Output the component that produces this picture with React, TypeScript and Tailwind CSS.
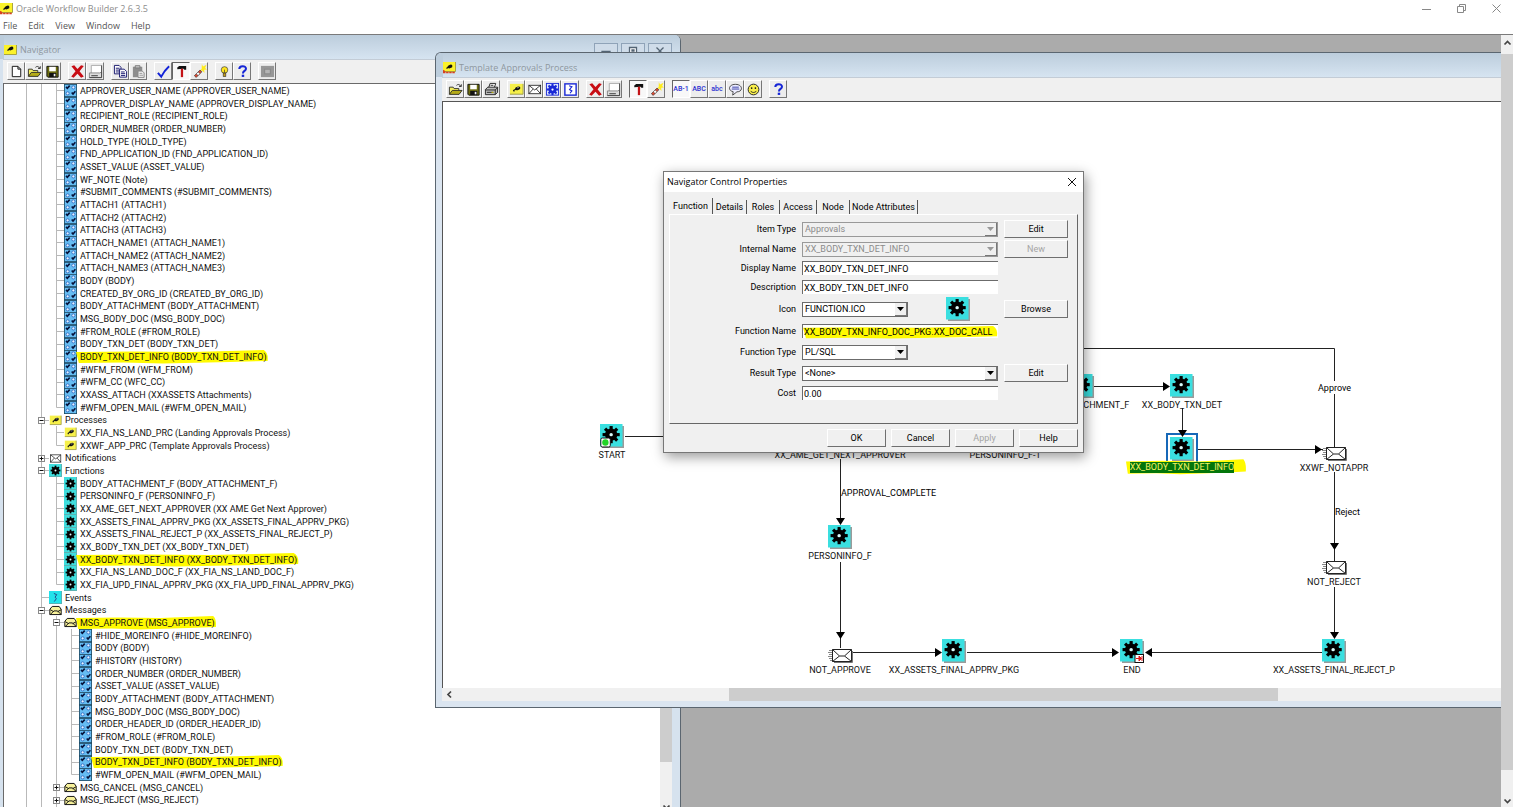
import { ReactNode } from "react";
import clsx from "clsx";

const UI = "font-['Roboto','Liberation_Sans',sans-serif]";
const CAPTION = "font-['Open_Sans','Noto_Sans',sans-serif]";

/* ---------- Icons ---------- */

const GEAR_TEETH = [0, 45, 90, 135, 180, 225, 270, 315];

function Gear({ color = "#000", hole = "#d8fbfb" }: { color?: string; hole?: string }) {
  return (
    <g>
      <circle cx="8" cy="8" r="4.3" fill={color} />
      {GEAR_TEETH.map((a) => (
        <rect key={a} x="6.9" y="2" width="2.2" height="4" fill={color} transform={`rotate(${a} 8 8)`} />
      ))}
      <circle cx="8" cy="8" r="1.2" fill={hole} />
    </g>
  );
}

function Blob() {
  return (
    <g>
      <ellipse cx="9.3" cy="6.8" rx="2.9" ry="1.9" transform="rotate(-18 9.3 6.8)" fill="#111" />
      <path d="M7.5 7.500L4.500 9.300M5.300 8.300v1.800" stroke="#111" strokeWidth="1.3" />
      <path d="M8.500 6.300l2-.6" stroke="#bbb" strokeWidth=".8" />
    </g>
  );
}

const glyphs: Record<string, ReactNode> = {
  new: <path d="M3.5 2.5h6l3 3v8h-9zM9.5 2.5v3h3" fill="#fff" stroke="#111" />,
  open: (
    <g stroke="#222" strokeWidth=".9">
      <path d="M1.5 13V5.5h4l1 1.5h5v2" fill="#f4ee5c" />
      <path d="M1.5 13.2L4.5 9H15l-3.2 4.2z" fill="#b5ab17" />
      <path d="M9 3.6c1.5-1.5 3.5-1.2 4.5.8M14.2 2.4v2.4h-2.4" fill="none" />
    </g>
  ),
  save: (
    <g>
      <path d="M2 2.5h12v11.5H3l-1-1z" fill="#6d6d10" stroke="#111" />
      <rect x="4.5" y="3" width="7" height="4.8" fill="#fff" />
      <rect x="4.5" y="9.5" width="7.5" height="4.5" fill="#111" />
      <rect x="9.3" y="10.5" width="1.8" height="2.6" fill="#eee" />
    </g>
  ),
  print: (
    <g stroke="#222">
      <path d="M5 6l1.5-4.5h6L11 6" fill="#fff" />
      <path d="M1.5 8l2.5-2.5h10.5V11l-2.5 2.5H1.5z" fill="#bdbdbd" />
      <path d="M1.5 8.5H12l2.5-2.5M12 8.5v5M3 11h7M7 3.5h3" fill="none" />
      <path d="M8 11h2" stroke="#d6c900" />
    </g>
  ),
  remove: (
    <path d="M1.5 2.3l3-1L8 5.2l3.8-4 2.9 1L10.200 7.800l4.500 5.400-2.900 1.400L8 10.500l-4.200 4.100L1.300 13.200 5.900 7.800z" fill="#c80d14" />
  ),
  props: (
    <g>
      <path d="M3.5 1.5h11v9h-11z" fill="#fff" stroke="#aaa" />
      <path d="M1.5 9.5h11l2-1v6h-13z" fill="#ddd" stroke="#888" />
      <path d="M3.5 12.5h7" stroke="#333" />
      <path d="M14.500 1.500v13h-13" fill="none" stroke="#444" />
    </g>
  ),
  copy: (
    <g fill="#fff" stroke="#15156d">
      <path d="M1.5 1.5h5l2 2v7h-7z" />
      <path d="M3 4.5h4M3 6.5h4M3 8.5h4" />
      <path d="M7 5.5h5l2.5 2.5v6H7z" />
      <path d="M8.5 8.5h4M8.5 10.3h4.5M8.5 12.2h4.5" />
    </g>
  ),
  paste: (
    <g>
      <path d="M2 3h10v11H2z" fill="#8d8d8d" />
      <path d="M4.5 1.8h5v2.4h-5z" fill="#c9c9c9" stroke="#777" />
      <path d="M7.5 7.5h4.5l2 2v4.8H7.5z" fill="#eee" stroke="#888" />
      <path d="M9 10h3M9 12h4" stroke="#999" />
    </g>
  ),
  check: <path d="M2 9.5L5.6 13.5C8 8.8 10.3 5.6 14 2.3" fill="none" stroke="#1222d8" strokeWidth="2.1" />,
  pin: (
    <g>
      <path d="M3.5 5.5V3.6l2-1.4h7.5V6h-2l-.8-1z" fill="#111" />
      <rect x="7.3" y="5" width="2.4" height="9" fill="#c41317" />
    </g>
  ),
  wand: (
    <g>
      <path d="M10.5 0l1.200 2.600L15.500.800l-1.500 3.400 2 1.600-3 .4.300 3.300-2.200-2.300-3-.4 2.200-1.600z" fill="#ffec1c" />
      <path d="M2.500 12.500l6-6 2 1.800-6 6z" fill="#df4a31" stroke="#333" strokeWidth=".7" />
      <path d="M4.500 10.500l2-2 2 1.800-2 2z" fill="#fff" stroke="#333" strokeWidth=".5" />
    </g>
  ),
  bulb: (
    <g stroke="#333" strokeWidth=".7">
      <circle cx="8" cy="6.3" r="3.5" fill="#ffe51f" />
      <rect x="6.6" y="9.7" width="2.8" height="3.6" fill="#c99c12" />
      <path d="M8 6v3.5" />
    </g>
  ),
  help: (
    <g>
      <path d="M4.6 5.4C4.6 1.4 11.7 1.3 11.7 5c0 2.4-3.2 2.4-3.2 5" fill="none" stroke="#1626d6" strokeWidth="2.2" />
      <rect x="7.2" y="11.4" width="2.6" height="2.4" fill="#1626d6" />
    </g>
  ),
  blank: (
    <g>
      <rect x="1" y="2" width="14" height="12" fill="#969696" />
      <rect x="5" y="5.5" width="6" height="5" fill="#b4b4b4" stroke="#858585" />
    </g>
  ),
  process: (
    <g>
      <rect x="1" y="2" width="14" height="11" fill="#f6f04a" />
      <path d="M15 2v11H1" fill="none" stroke="#9c9a48" />
      <Blob />
    </g>
  ),
  envelope: (
    <g stroke="#222" strokeWidth=".9">
      <rect x="2" y="3.5" width="12.5" height="9" fill="#fff" />
      <path d="M2 3.5l6.2 5 6.3-5M2 12.5l4.5-5M14.5 12.5L10 7.5" fill="none" />
    </g>
  ),
  message: (
    <g stroke="#111" strokeWidth="1.2">
      <path d="M1 13V6.5L4 3h8.5L15 6.5V13z" fill="#f7f19a" />
      <path d="M1.5 13l4.5-4.5h4.5L15 13M1.5 7L6 9.5M15 7l-4.5 2.5" fill="none" />
    </g>
  ),
  gearBlue: (
    <g>
      <rect x="1.5" y="1.5" width="13" height="12.5" fill="#dfe8ff" stroke="#1a29d6" />
      <Gear color="#1a29d6" hole="#fff" />
    </g>
  ),
  eventBlue: (
    <g fill="none" stroke="#1a29d6">
      <rect x="2" y="2" width="12" height="12" fill="#fff" strokeWidth="1.5" />
      <path d="M6.500 4l3 1L7 8l2.500 1.500L7.500 12" strokeWidth="1.200" />
    </g>
  ),
  note: (
    <g>
      <path d="M8 2.5c8 0 8.3 8 1.5 8L5 14l.5-3.700C-.5 9 .5 2.500 8 2.500z" fill="#eef" stroke="#333" strokeWidth=".9" />
      <path d="M4.5 5.5h7M4 7.5h8" stroke="#222b9c" strokeWidth=".9" />
    </g>
  ),
  smile: (
    <g>
      <circle cx="8" cy="8" r="5.7" fill="#f8ee4a" stroke="#222" />
      <circle cx="6" cy="6.5" r=".9" fill="#111" />
      <circle cx="10" cy="6.5" r=".9" fill="#111" />
      <path d="M5 9.5c1 2.200 5 2.200 6 0" fill="none" stroke="#222" />
    </g>
  ),
  attribute: (
    <g>
      <rect width="16" height="16" fill="#66bdf3" />
      <path d="M2.500 3.500l1.600 1.800L7 2M9.500 10.500l1.600 1.800 2.900-3.300" fill="none" stroke="#06123a" strokeWidth="2" />
      <circle cx="11.500" cy="4.200" r="1.900" fill="#e2f4ff" stroke="#1d55b8" strokeWidth=".9" />
      <circle cx="4.500" cy="11.500" r="1.900" fill="#e2f4ff" stroke="#1d55b8" strokeWidth=".9" />
      <rect x=".5" y=".5" width="15" height="15" fill="none" stroke="#1f4a63" />
    </g>
  ),
  fn: (
    <g>
      <rect width="16" height="16" fill="#3fdede" />
      <path d="M15.500 0v15.500H0" fill="none" stroke="#69a3a3" />
      <Gear />
    </g>
  ),
  event: (
    <g>
      <rect width="16" height="16" fill="#22e2ea" />
      <path d="M15.500 0v15.500H0" fill="none" stroke="#69a3a3" />
      <path d="M6 3l3.500 1.500L7.500 7.500 9 9.500 6.500 13" fill="none" stroke="#222a77" />
    </g>
  ),
};

function Glyph({ name, className }: { name: string; className?: string }) {
  return (
    <svg viewBox="0 0 16 16" className={clsx("shrink-0", className)} aria-hidden="true">
      {glyphs[name]}
    </svg>
  );
}

function AppIcon({ builder = false }: { builder?: boolean }) {
  return (
    <svg viewBox="0 0 13 12" className="h-3 w-[13px] shrink-0" aria-hidden="true">
      <rect y={builder ? 0 : 1} width="12" height="9" fill="#fbf22b" />
      <path d={builder ? "M12.500 0v9.500H0" : "M12.500 1v9.500H0"} fill="none" stroke="#a9a540" />
      <ellipse cx="7" cy="4.500" rx="2.500" ry="1.700" fill="#111" transform="rotate(-20 7 4.500)" />
      <path d="M5.500 5L3.500 6.500" stroke="#111" strokeWidth="1.300" />
      {builder && <path d="M0 10.500h12M0 8.500l2 1.500" stroke="#d6421f" strokeWidth="1.600" strokeDasharray="2.500 .6" />}
    </svg>
  );
}

/* ---------- Toolbars ---------- */

type Tool = { icon?: string; text?: string; label: string; pressed?: boolean };

const navigatorTools: Tool[][] = [
  [{ icon: "new", label: "New" }, { icon: "open", label: "Open" }, { icon: "save", label: "Save" }],
  [{ icon: "remove", label: "Delete" }, { icon: "props", label: "Properties" }],
  [{ icon: "copy", label: "Copy" }, { icon: "paste", label: "Paste" }],
  [{ icon: "check", label: "Verify" }, { icon: "pin", label: "Developer mode", pressed: true }, { icon: "wand", label: "Quick start" }],
  [{ icon: "bulb", label: "Find" }, { icon: "help", label: "Help" }],
  [{ icon: "blank", label: "Stop" }],
];

const processTools: Tool[][] = [
  [{ icon: "open", label: "Open" }, { icon: "save", label: "Save" }, { icon: "print", label: "Print" }],
  [
    { icon: "process", label: "New process" },
    { icon: "envelope", label: "New notification" },
    { icon: "gearBlue", label: "New function" },
    { icon: "eventBlue", label: "New event" },
  ],
  [{ icon: "remove", label: "Delete" }, { icon: "props", label: "Properties" }],
  [{ icon: "pin", label: "Developer mode", pressed: true }, { icon: "wand", label: "Quick start" }],
  [
    { text: "AB-1", label: "Instance labels", pressed: true },
    { text: "ABC", label: "Internal names" },
    { text: "abc", label: "Display names" },
    { icon: "note", label: "Comments" },
    { icon: "smile", label: "Performers" },
  ],
  [{ icon: "help", label: "Help" }],
];

function Toolbar({ groups }: { groups: Tool[][] }) {
  return (
    <div className="flex h-6 shrink-0 items-start gap-[7px] border-t border-[#c3ccd6] bg-[#f0f0f0] pt-[2px] pl-1">
      {groups.map((group, i) => (
        <div key={i} className="flex">
          {group.map((tool) => (
            <button
              key={tool.label}
              type="button"
              aria-label={tool.label}
              className={clsx(
                "flex h-[18px] w-[18px] items-center justify-center border",
                tool.pressed
                  ? "border-t-[#666] border-r-white border-b-white border-l-[#666] bg-[#f8f8f8]"
                  : "border-t-white border-r-[#777] border-b-[#777] border-l-white bg-[#ededed]",
              )}
            >
              {tool.icon ? (
                <Glyph name={tool.icon} className="h-[15px] w-[15px]" />
              ) : (
                <span className="text-[7px] leading-none font-medium text-[#2a2fd0]">{tool.text}</span>
              )}
            </button>
          ))}
        </div>
      ))}
    </div>
  );
}

/* ---------- Navigator tree ---------- */

type TreeRow = { guides: string; icon: string; text: string; marked?: boolean };

// guides: one character per column, "|" line, "t" tee, "l" last child, "+" / "-" expander
const attributes = (guides: string, names: string[], marked: string): TreeRow[] =>
  names.map((text, i) => ({
    guides: guides + (i === names.length - 1 ? "l" : "t"),
    icon: "attribute",
    text,
    marked: text === marked,
  }));

const MARKED_ATTRIBUTE = "BODY_TXN_DET_INFO (BODY_TXN_DET_INFO)";

const functionNames = [
  "BODY_ATTACHMENT_F (BODY_ATTACHMENT_F)",
  "PERSONINFO_F (PERSONINFO_F)",
  "XX_AME_GET_NEXT_APPROVER (XX AME Get Next Approver)",
  "XX_ASSETS_FINAL_APPRV_PKG (XX_ASSETS_FINAL_APPRV_PKG)",
  "XX_ASSETS_FINAL_REJECT_P (XX_ASSETS_FINAL_REJECT_P)",
  "XX_BODY_TXN_DET (XX_BODY_TXN_DET)",
  "XX_BODY_TXN_DET_INFO (XX_BODY_TXN_DET_INFO)",
  "XX_FIA_NS_LAND_DOC_F (XX_FIA_NS_LAND_DOC_F)",
  "XX_FIA_UPD_FINAL_APPRV_PKG (XX_FIA_UPD_FINAL_APPRV_PKG)",
];

const tree: TreeRow[] = [
  ...attributes(
    "||",
    [
      "APPROVER_USER_NAME (APPROVER_USER_NAME)",
      "APPROVER_DISPLAY_NAME (APPROVER_DISPLAY_NAME)",
      "RECIPIENT_ROLE (RECIPIENT_ROLE)",
      "ORDER_NUMBER (ORDER_NUMBER)",
      "HOLD_TYPE (HOLD_TYPE)",
      "FND_APPLICATION_ID (FND_APPLICATION_ID)",
      "ASSET_VALUE (ASSET_VALUE)",
      "WF_NOTE (Note)",
      "#SUBMIT_COMMENTS (#SUBMIT_COMMENTS)",
      "ATTACH1 (ATTACH1)",
      "ATTACH2 (ATTACH2)",
      "ATTACH3 (ATTACH3)",
      "ATTACH_NAME1 (ATTACH_NAME1)",
      "ATTACH_NAME2 (ATTACH_NAME2)",
      "ATTACH_NAME3 (ATTACH_NAME3)",
      "BODY (BODY)",
      "CREATED_BY_ORG_ID (CREATED_BY_ORG_ID)",
      "BODY_ATTACHMENT (BODY_ATTACHMENT)",
      "MSG_BODY_DOC (MSG_BODY_DOC)",
      "#FROM_ROLE (#FROM_ROLE)",
      "BODY_TXN_DET (BODY_TXN_DET)",
      MARKED_ATTRIBUTE,
      "#WFM_FROM (WFM_FROM)",
      "#WFM_CC (WFC_CC)",
      "XXASS_ATTACH (XXASSETS Attachments)",
      "#WFM_OPEN_MAIL (#WFM_OPEN_MAIL)",
    ],
    MARKED_ATTRIBUTE,
  ),
  { guides: "|-", icon: "process", text: "Processes" },
  { guides: "||t", icon: "process", text: "XX_FIA_NS_LAND_PRC (Landing Approvals Process)" },
  { guides: "||l", icon: "process", text: "XXWF_APP_PRC (Template Approvals Process)" },
  { guides: "|+", icon: "envelope", text: "Notifications" },
  { guides: "|-", icon: "fn", text: "Functions" },
  ...functionNames.map((text, i) => ({
    guides: i === functionNames.length - 1 ? "||l" : "||t",
    icon: "fn",
    text,
    marked: i === 6,
  })),
  { guides: "|t", icon: "event", text: "Events" },
  { guides: "|-", icon: "message", text: "Messages" },
  { guides: "||-", icon: "message", text: "MSG_APPROVE (MSG_APPROVE)", marked: true },
  ...attributes(
    "|||",
    [
      "#HIDE_MOREINFO (#HIDE_MOREINFO)",
      "BODY (BODY)",
      "#HISTORY (HISTORY)",
      "ORDER_NUMBER (ORDER_NUMBER)",
      "ASSET_VALUE (ASSET_VALUE)",
      "BODY_ATTACHMENT (BODY_ATTACHMENT)",
      "MSG_BODY_DOC (MSG_BODY_DOC)",
      "ORDER_HEADER_ID (ORDER_HEADER_ID)",
      "#FROM_ROLE (#FROM_ROLE)",
      "BODY_TXN_DET (BODY_TXN_DET)",
      MARKED_ATTRIBUTE,
      "#WFM_OPEN_MAIL (#WFM_OPEN_MAIL)",
    ],
    MARKED_ATTRIBUTE,
  ),
  { guides: "||+", icon: "message", text: "MSG_CANCEL (MSG_CANCEL)" },
  { guides: "||+", icon: "message", text: "MSG_REJECT (MSG_REJECT)" },
];

function Guide({ kind }: { kind: string }) {
  const box = kind === "+" || kind === "-";
  return (
    <svg viewBox="0 0 15 13" className="h-[13px] w-[15px] shrink-0" aria-hidden="true">
      <path d={kind === "l" ? "M7.500 0v6.500" : "M7.500 0v13"} stroke="#b9b9b9" />
      {kind !== "|" && <path d="M7.500 6.500h7.500" stroke="#b9b9b9" />}
      {box && <rect x="4.500" y="3.500" width="6" height="6" fill="#fff" stroke="#8a8a8a" />}
      {box && <path d={kind === "+" ? "M5.500 6.500h4M7.500 4.500v4" : "M5.500 6.500h4"} stroke="#111" />}
    </svg>
  );
}

// Felt-tip marker stroke behind a label
function Marker({ className }: { className: string }) {
  return (
    <svg
      viewBox="0 0 200 16"
      preserveAspectRatio="none"
      className={clsx("pointer-events-none absolute", className)}
      aria-hidden="true"
    >
      <path d="M0 3L60 2.500 120 3 195 1Q200 4 199 12L160 13 90 14.500 50 13.500 3 14z" fill="#fffa00" />
    </svg>
  );
}

function Tree() {
  return (
    <ul className="min-w-0 flex-1 overflow-hidden bg-white pl-[15px]">
      {tree.map((row, i) => (
        <li key={i} className="flex h-[13px] items-center [&:nth-child(3n)]:h-3">
          {row.guides.split("").map((kind, j) => (
            <Guide key={j} kind={kind} />
          ))}
          <Glyph name={row.icon} className="h-[13px] w-[13px]" />
          <span className="relative ml-[3px] text-[9px] leading-3 whitespace-nowrap text-[#111]">
            {row.marked && <Marker className="-top-[2px] -left-1 h-4 w-[calc(100%+6px)]" />}
            <span className="relative">{row.text}</span>
          </span>
        </li>
      ))}
    </ul>
  );
}

/* ---------- Windows ---------- */

function Caption({ title }: { title: string }) {
  return (
    <div className="flex h-6 shrink-0 items-center gap-[3px] bg-linear-to-b from-[#bccddc] to-[#d6e4f1] pt-[6px]">
      <AppIcon builder={title !== "Navigator"} />
      <h2 className={clsx(CAPTION, "text-[9px] leading-3 text-[#8f989f]")}>{title}</h2>
    </div>
  );
}

function Chevron({ dir }: { dir: "up" | "down" | "left" }) {
  const d = { up: "M1.500 5.500L4.500 2.500 7.500 5.500", down: "M1.500 2.500L4.500 5.500 7.500 2.500", left: "M6 1.500L3 4.500 6 7.500" }[dir];
  return (
    <svg viewBox="0 0 9 9" className="h-[9px] w-[9px]" aria-hidden="true">
      <path d={d} fill="none" stroke="#444" strokeWidth="1.700" />
    </svg>
  );
}

function WindowButtons() {
  const shapes = ["M8 8.500h8v3H8z", "M8.500 4.500h7v7h-7zM11 7h2v1h-2z", "M8.500 4.500l7 7M15.500 4.500l-7 7"];
  return (
    <div className="absolute top-2 right-2 flex gap-[3px]">
      {["Minimize", "Maximize", "Close"].map((label, i) => (
        <button key={label} type="button" aria-label={label} className="h-4 w-6 border border-[#8fa3b8] bg-[#cfdce9]">
          <svg viewBox="0 0 24 16" className="-mt-px -ml-px h-4 w-6" aria-hidden="true">
            <path d={shapes[i]} fill="#fff" stroke="#536474" strokeWidth="1.300" />
          </svg>
        </button>
      ))}
    </div>
  );
}

function NavigatorWindow() {
  return (
    <section className="absolute top-0 bottom-0 left-0 flex w-[681px] flex-col overflow-hidden rounded-tr-md border-r border-[#5b6670] bg-[#d6e2ee] pr-2 pl-[3px]">
      <div className="-mr-2 -ml-[3px] bg-[#bccddc] pl-1">
        <Caption title="Navigator" />
      </div>
      <WindowButtons />
      <Toolbar groups={navigatorTools} />
      <div className="flex min-h-0 flex-1 border-t border-l border-[#6a6a6a]">
        <Tree />
        <div className="flex w-3 flex-col items-center bg-[#f0f0f0]">
          <div className="h-[678px] w-full bg-[#cdcdcd]" />
          <div className="mt-auto h-1 overflow-hidden">
            <Chevron dir="down" />
          </div>
        </div>
      </div>
    </section>
  );
}

/* ---------- Process diagram ---------- */

type DiagramNode = {
  x: number;
  y: number;
  label: string;
  kind: "fn" | "mail";
  badge?: "start" | "end";
  selected?: boolean;
};

// x / y is the middle of the icon on the canvas
const nodes: DiagramNode[] = [
  { x: 169, y: 334, label: "START", kind: "fn", badge: "start" },
  { x: 397, y: 334, label: "XX_AME_GET_NEXT_APPROVER", kind: "fn" },
  { x: 562, y: 334, label: "PERSONINFO_F-1", kind: "fn" },
  { x: 639, y: 284, label: "BODY_ATTACHMENT_F", kind: "fn" },
  { x: 739, y: 284, label: "XX_BODY_TXN_DET", kind: "fn" },
  { x: 739, y: 347, label: "XX_BODY_TXN_DET_INFO", kind: "fn", selected: true },
  { x: 891, y: 347, label: "XXWF_NOTAPPR", kind: "mail" },
  { x: 891, y: 461, label: "NOT_REJECT", kind: "mail" },
  { x: 397, y: 435, label: "PERSONINFO_F", kind: "fn" },
  { x: 397, y: 549, label: "NOT_APPROVE", kind: "mail" },
  { x: 511, y: 549, label: "XX_ASSETS_FINAL_APPRV_PKG", kind: "fn" },
  { x: 689, y: 549, label: "END", kind: "fn", badge: "end" },
  { x: 891, y: 549, label: "XX_ASSETS_FINAL_REJECT_P", kind: "fn" },
];

const wires = [
  "M182 334.500H300",
  "M397.500 357V418",
  "M397.500 460V546",
  "M409 550.500H494",
  "M524 550.500H672",
  "M879 550.500H706",
  "M560 246.500H891.500V279",
  "M891.500 292V346",
  "M891.500 370V460",
  "M891.500 485V532",
  "M651 284.500H722",
  "M739.500 306V328",
  "M753 347.500H880",
];

const arrows = [
  "M393 416h9l-4.500 7z",
  "M393 530h9l-4.500 7z",
  "M492 546v9l7-4.500z",
  "M669 546v9l7-4.500z",
  "M709 546v9l-7-4.500z",
  "M720 280v9l7-4.500z",
  "M735 328h9l-4.500 7z",
  "M872 343v9l7-4.500z",
  "M887 441h9l-4.500 7z",
  "M887 530h9l-4.500 7z",
];

function FunctionTile({ badge }: { badge?: "start" | "end" }) {
  return (
    <svg viewBox="0 0 24 24" className="h-6 w-6" aria-hidden="true">
      <path d="M2 2h22v22H2z" fill="#9b9b9b" />
      <rect width="22.500" height="22.500" fill="#3adfe0" />
      <g transform="translate(-.3 -.8) scale(1.430)">
        <Gear />
      </g>
      {badge === "start" && (
        <g>
          <rect x=".8" y="14" width="9.500" height="9" rx="1.500" fill="#fff" stroke="#111" />
          <circle cx="5.400" cy="18.500" r="3.200" fill="#22d426" />
        </g>
      )}
      {badge === "end" && (
        <g>
          <rect x="15" y="15.500" width="8.500" height="8" fill="#fff" stroke="#111" />
          <path d="M16 19.500h4M19 17l2.500 2.500L19 22zM22 17v5" fill="#e01b1b" stroke="#e01b1b" />
        </g>
      )}
    </svg>
  );
}

function MailTile() {
  return (
    <svg viewBox="0 0 25 24" className="h-6 w-[25px]" aria-hidden="true">
      <path d="M4.500 10.500h19v12h-19z" fill="#fff" stroke="#222" />
      <path d="M24.500 12v11.500H6" fill="none" stroke="#777" />
      <path d="M4.500 10.500l7 6.500h5l7-6.500M4.500 22.500l7-5.500M23.500 22.500l-7-5.500" fill="none" stroke="#222" />
      <path d="M1 11.500h3M0 13.500h4M1 15.500h3M0 17.500h4M1 19.500h3M2 21.500h2" stroke="#888" />
    </svg>
  );
}

function ProcessNode({ node }: { node: DiagramNode }) {
  return (
    <div
      className="absolute flex w-40 -translate-x-1/2 flex-col items-center"
      style={{ left: node.x, top: node.y - 12 }}
    >
      {node.kind === "fn" ? (
        <div className={clsx(node.selected && "outline-2 outline-offset-2 outline-[#1668b8]")}>
          <FunctionTile badge={node.badge} />
        </div>
      ) : (
        <MailTile />
      )}
      <span className="relative mt-px text-[9px] leading-3 whitespace-nowrap text-[#111]">
        {node.selected && <Marker className="-top-1 -left-1 h-[18px] w-[calc(100%+16px)]" />}
        <span className={clsx("relative block", node.selected && "h-[11px] bg-[#04760a] leading-[11px] text-[#f4f266]")}>
          {node.label}
        </span>
      </span>
    </div>
  );
}

function Diagram() {
  return (
    <div className="relative min-h-0 flex-1 overflow-hidden border-t border-l border-[#555] bg-white">
      <svg className="absolute inset-0 h-full w-full" aria-hidden="true">
        <path d={wires.join("")} fill="none" stroke="#222" />
      </svg>
      {nodes.map((node) => (
        <ProcessNode key={node.label} node={node} />
      ))}
      {/* arrow heads stay above the selection frame */}
      <svg className="pointer-events-none absolute inset-0 h-full w-full" aria-hidden="true">
        <path d={arrows.join("")} fill="#000" />
      </svg>
      <span className="absolute top-[280px] left-[875px] text-[9px] leading-3">Approve</span>
      <span className="absolute top-[404px] left-[892px] text-[9px] leading-3">Reject</span>
      <span className="absolute top-[385px] left-[398px] text-[9px] leading-3">APPROVAL_COMPLETE</span>
    </div>
  );
}

function ProcessWindow() {
  return (
    <section className="absolute top-[17px] right-0 left-[435px] flex h-[656px] flex-col overflow-hidden rounded-tl-md border-t border-b border-l border-[#5b6670] bg-[#dbe5f0] pb-[6px]">
      <div className="bg-[#bccddc] pl-[7px]">
        <Caption title="Template Approvals Process" />
      </div>
      <div className="ml-[6px] flex min-h-0 flex-1 flex-col">
        <Toolbar groups={processTools} />
        <Diagram />
        <div className="flex h-[13px] shrink-0 items-center bg-[#f0f0f0] pl-[3px]">
          <Chevron dir="left" />
          <div className="ml-[26%] h-full w-[52%] bg-[#cdcdcd]" />
        </div>
      </div>
    </section>
  );
}

/* ---------- Properties dialog ---------- */

const SUNKEN = "border-t border-l border-[#6b6b6b] bg-white";

function Combo({ id, value, wide = false, disabled = false }: { id: string; value: string; wide?: boolean; disabled?: boolean }) {
  return (
    <div className={clsx("relative", wide ? "w-full" : "w-[106px]")}>
      <select
        id={id}
        disabled={disabled}
        defaultValue={value}
        className={clsx(
          "block h-[15px] w-full appearance-none border pl-[2px] text-[9px] leading-3",
          disabled ? "border-[#999] bg-[#f0f0f0] text-[#8b8b8b] opacity-100" : "border-[#6b6b6b] bg-white text-black",
        )}
      >
        <option>{value}</option>
      </select>
      <span className="pointer-events-none absolute top-px right-px flex h-[13px] w-3 items-center justify-center border-r border-b border-[#777] bg-[#f0f0f0]">
        <svg viewBox="0 0 7 4" className="h-1 w-[7px]" aria-hidden="true">
          <path d="M0 0h7L3.500 4z" fill={disabled ? "#999" : "#000"} />
        </svg>
      </span>
    </div>
  );
}

function TextField({ id, value, marked = false }: { id: string; value: string; marked?: boolean }) {
  return (
    <div className={clsx("relative h-[14px] w-full", SUNKEN)}>
      {marked && <Marker className="top-0 left-0 h-[15px] w-full" />}
      <input
        id={id}
        type="text"
        defaultValue={value}
        className="relative block h-[13px] w-full bg-transparent pl-px text-[9px] leading-3 text-black outline-none"
      />
    </div>
  );
}

function PushButton({ children, disabled, className }: { children: ReactNode; disabled?: boolean; className?: string }) {
  return (
    <button
      type="button"
      disabled={disabled}
      className={clsx(
        "h-[18px] border border-t-white border-r-[#6f6f6f] border-b-[#6f6f6f] border-l-white bg-[#f0f0f0] text-[9px] leading-3",
        disabled ? "text-[#a5a5a5]" : "text-black",
        className,
      )}
    >
      {children}
    </button>
  );
}

const fields: { id: string; label: string; control: ReactNode; action?: ReactNode }[] = [
  {
    id: "item-type",
    label: "Item Type",
    control: <Combo id="item-type" value="Approvals" wide disabled />,
    action: <PushButton className="w-full">Edit</PushButton>,
  },
  {
    id: "internal-name",
    label: "Internal Name",
    control: <Combo id="internal-name" value="XX_BODY_TXN_DET_INFO" wide disabled />,
    action: <PushButton className="w-full" disabled>New</PushButton>,
  },
  { id: "display-name", label: "Display Name", control: <TextField id="display-name" value="XX_BODY_TXN_DET_INFO" /> },
  { id: "description", label: "Description", control: <TextField id="description" value="XX_BODY_TXN_DET_INFO" /> },
  {
    id: "icon",
    label: "Icon",
    control: (
      <div className="flex items-center gap-[38px]">
        <Combo id="icon" value="FUNCTION.ICO" />
        <FunctionTile />
      </div>
    ),
    action: <PushButton className="w-full">Browse</PushButton>,
  },
  {
    id: "function-name",
    label: "Function Name",
    control: <TextField id="function-name" value="XX_BODY_TXN_INFO_DOC_PKG.XX_DOC_CALL" marked />,
  },
  { id: "function-type", label: "Function Type", control: <Combo id="function-type" value="PL/SQL" /> },
  {
    id: "result-type",
    label: "Result Type",
    control: <Combo id="result-type" value="<None>" wide />,
    action: <PushButton className="w-full">Edit</PushButton>,
  },
  { id: "cost", label: "Cost", control: <TextField id="cost" value="0.00" /> },
];

const tabs = [
  { name: "Function", width: "w-11" },
  { name: "Details", width: "w-[34px]" },
  { name: "Roles", width: "w-[33px]" },
  { name: "Access", width: "w-[37px]" },
  { name: "Node", width: "w-[33px]" },
  { name: "Node Attributes", width: "w-[68px]" },
];

function PropertiesDialog() {
  return (
    <div
      role="dialog"
      aria-label="Navigator Control Properties"
      className="absolute top-[171px] left-[663px] flex w-[421px] flex-col border border-[#777] bg-[#f0f0f0] pb-[5px] shadow-[2px_4px_12px_rgba(0,0,0,0.4)]"
    >
      <div className="flex h-5 items-center justify-between bg-white pr-[6px] pl-[3px]">
        <h2 className={clsx(CAPTION, "text-[9px] leading-3 text-black")}>Navigator Control Properties</h2>
        <button type="button" aria-label="Close">
          <svg viewBox="0 0 10 10" className="h-[10px] w-[10px]" aria-hidden="true">
            <path d="M1 1l8 8M9 1L1 9" stroke="#111" />
          </svg>
        </button>
      </div>
      <div role="tablist" className="mt-[5px] flex h-[17px] items-end pl-[5px]">
        {tabs.map((tab, i) => (
          <button
            key={tab.name}
            type="button"
            role="tab"
            aria-selected={i === 0}
            className={clsx(
              "border-r border-[#555] text-[9px] leading-3 whitespace-nowrap",
              tab.width,
              i === 0 ? "h-4 pb-px" : "h-[14px]",
            )}
          >
            {tab.name}
          </button>
        ))}
      </div>
      <div className="mx-[5px] h-[210px] border border-t-white border-r-[#666] border-b-[#666] border-l-white pt-1">
        <div className="grid grid-cols-[126px_196px_64px] grid-rows-[20px_20px_18px_20px_24px_20px_22px_20px_20px] items-center gap-x-[6px]">
          {fields.map((f) => (
            <div key={f.id} className="contents">
              <label htmlFor={f.id} className="text-right text-[9px] leading-3">
                {f.label}
              </label>
              {f.control}
              <div className="flex">{f.action}</div>
            </div>
          ))}
        </div>
      </div>
      <div className="mt-[5px] mr-[5px] flex justify-end gap-[5px]">
        <PushButton className="w-[59px]">OK</PushButton>
        <PushButton className="w-[59px]">Cancel</PushButton>
        <PushButton className="w-[59px]" disabled>Apply</PushButton>
        <PushButton className="w-[59px]">Help</PushButton>
      </div>
    </div>
  );
}

/* ---------- Application ---------- */

export default function App() {
  return (
    <div className={clsx(UI, "relative flex h-screen flex-col overflow-hidden bg-white")}>
      <header className={clsx(CAPTION, "border-b border-[#7a7a7a] text-[9px] leading-3")}>
        <div className="flex h-[17px] items-center justify-between pr-3">
          <div className="flex items-center gap-[3px]">
            <AppIcon builder />
            <h1 className="text-[#8d8d8d]">Oracle Workflow Builder 2.6.3.5</h1>
          </div>
          <div className="flex gap-[26px]">
            {["M0 5.500h9", "M.5 2.500h6v6h-6zM2.500 2.500v-2h6v6h-2", "M.5.500l8 8M8.500.500l-8 8"].map((d, i) => (
              <button key={d} type="button" aria-label={["Minimize", "Restore", "Close"][i]}>
                <svg viewBox="0 0 9 9" className="h-[9px] w-[9px]" aria-hidden="true">
                  <path d={d} fill="none" stroke="#888" />
                </svg>
              </button>
            ))}
          </div>
        </div>
        <nav className="flex h-[17px] items-center gap-[11px] pl-[3px] text-[#555]">
          {["File", "Edit", "View", "Window", "Help"].map((item) => (
            <button key={item} type="button">
              {item}
            </button>
          ))}
        </nav>
      </header>

      <main className="flex min-h-0 flex-1">
        <div className="relative min-w-0 flex-1 overflow-hidden bg-[#ababab]">
          <NavigatorWindow />
          <ProcessWindow />
        </div>
        <div className="flex w-3 flex-col items-center bg-[#f0f0f0] pt-1 pb-px">
          <Chevron dir="up" />
          <div className="mt-[6px] mb-[27px] w-full flex-1 bg-[#cdcdcd]" />
          <Chevron dir="down" />
        </div>
      </main>

      <PropertiesDialog />
    </div>
  );
}
